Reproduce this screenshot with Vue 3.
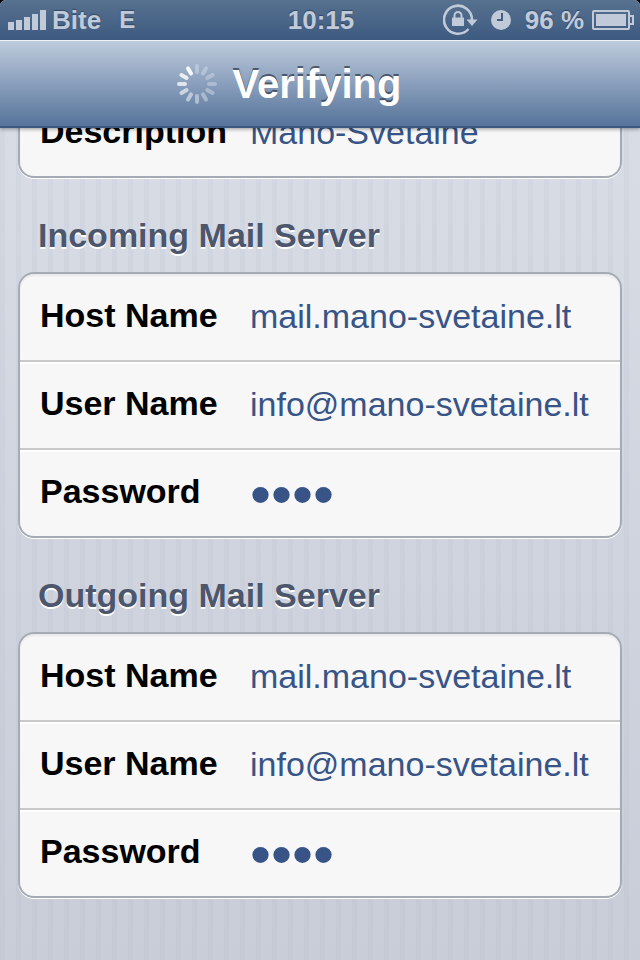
<script setup>
import { reactive } from 'vue'

const description = reactive({ label: 'Description', value: 'Mano-Svetaine' })

const groups = reactive([
  {
    id: 'incoming',
    title: 'Incoming Mail Server',
    fields: [
      { id: 'host', label: 'Host Name', type: 'text', value: 'mail.mano-svetaine.lt' },
      { id: 'user', label: 'User Name', type: 'text', value: 'info@mano-svetaine.lt' },
      { id: 'password', label: 'Password', type: 'password', value: 'pass' },
    ],
  },
  {
    id: 'outgoing',
    title: 'Outgoing Mail Server',
    fields: [
      { id: 'host', label: 'Host Name', type: 'text', value: 'mail.mano-svetaine.lt' },
      { id: 'user', label: 'User Name', type: 'text', value: 'info@mano-svetaine.lt' },
      { id: 'password', label: 'Password', type: 'password', value: 'pass' },
    ],
  },
])

// Spoke opacities, clockwise from twelve o'clock
const spokes = [0.28, 0.28, 0.28, 0.3, 0.32, 0.36, 0.42, 0.5, 0.6, 0.74, 0.82, 0.92]
</script>

<template>
  <div class="screen">
    <header class="top">
      <div class="status">
        <div class="side">
          <svg class="signal" width="38" height="20" viewBox="0 0 38 20" aria-hidden="true">
            <path d="M0 12h6v8H0zM8 10h6v10H8zM16 7h6v13h-6zM24 4h6v16h-6zM32 0h6v20h-6z" fill="currentColor" />
          </svg>
          <span>Bite</span>
          <span class="network">E</span>
        </div>
        <time>10:15</time>
        <div class="side right">
          <svg class="lock" width="36" height="32" viewBox="0 0 36 32" aria-hidden="true">
            <path d="M25.5 25A14 14 0 1 1 29 16" fill="none" stroke="currentColor" stroke-width="2.6" />
            <path d="M23.5 15.5h11L29 22z" fill="currentColor" />
            <rect x="9" y="13.5" width="12" height="8.5" rx="0.5" fill="currentColor" />
            <path d="M11.5 15v-3.5a3.5 3.5 0 0 1 7 0V15" fill="none" stroke="currentColor" stroke-width="2" />
          </svg>
          <svg class="clock" width="20" height="20" viewBox="0 0 20 20" aria-hidden="true">
            <circle cx="10" cy="10" r="10" fill="currentColor" />
            <path d="M11 3v7H6" fill="none" stroke="#425e83" stroke-width="2" />
          </svg>
          <span class="percent">96 %</span>
          <svg class="battery" width="42" height="20" viewBox="0 0 42 20" aria-hidden="true">
            <rect x="1" y="1" width="36" height="18" rx="1" fill="none" stroke="currentColor" stroke-width="2" />
            <rect x="4" y="4" width="30" height="12" fill="currentColor" />
            <path d="M38 6h3v8h-3" fill="none" stroke="currentColor" stroke-width="2" />
          </svg>
        </div>
      </div>
      <div class="nav">
        <svg class="spinner" width="40" height="40" viewBox="-20 -20 40 40" aria-hidden="true">
          <line
            v-for="(opacity, i) in spokes"
            :key="i"
            x1="0"
            y1="-12"
            x2="0"
            y2="-18"
            stroke="#fff"
            stroke-width="4"
            stroke-linecap="round"
            :opacity="opacity"
            :transform="`rotate(${i * 30})`"
          />
        </svg>
        <h1>Verifying</h1>
      </div>
    </header>

    <form class="content" @submit.prevent>
      <div class="card first">
        <div class="row">
          <label for="description">{{ description.label }}</label>
          <input id="description" v-model="description.value" type="text" />
        </div>
      </div>

      <section v-for="group in groups" :key="group.id">
        <h2>{{ group.title }}</h2>
        <div class="card">
          <div v-for="field in group.fields" :key="field.id" class="row">
            <label :for="`${group.id}-${field.id}`">{{ field.label }}</label>
            <input
              :id="`${group.id}-${field.id}`"
              v-model="field.value"
              :type="field.type"
              autocomplete="off"
              spellcheck="false"
            />
          </div>
        </div>
      </section>
    </form>
  </div>
</template>

<style>
body {
  margin: 0;
  background: #000;
}
</style>

<style scoped>
.screen {
  min-height: 100vh;
  box-sizing: border-box;
  border-radius: 6px 6px 0 0;
  overflow: hidden;
  font-family: 'Liberation Sans', Arial, Helvetica, sans-serif;
  background:
    repeating-linear-gradient(90deg, rgba(140, 155, 185, 0.07) 0 5px, transparent 5px 16px),
    linear-gradient(#d9dee7 0, #d6dbe4 200px, #cfd3dd 600px, #c9cdd8);
}

.top {
  position: relative;
  z-index: 1;
  box-shadow: 0 1px 4px rgba(0, 0, 0, 0.4);
}

.status {
  display: grid;
  grid-template-columns: 1fr auto 1fr;
  align-items: center;
  height: 40px;
  padding: 0 6px 0 8px;
  color: #c0cad8;
  font-size: 26px;
  font-weight: bold;
  line-height: 40px;
  text-shadow: 0 -1px 1px rgba(30, 50, 80, 0.6);
  background: linear-gradient(#57718f, #3d5a80);
}

.side {
  display: flex;
  align-items: center;
}

.side svg {
  flex: none;
}

.right {
  justify-content: flex-end;
}

.signal {
  margin-right: 6px;
}

.network {
  margin-left: 18px;
  font-size: 24px;
}

.clock {
  margin: 0 14px 0 12px;
}

.percent {
  margin-right: 8px;
}

.nav {
  display: flex;
  align-items: center;
  justify-content: center;
  gap: 16px;
  box-sizing: border-box;
  height: 88px;
  padding-right: 62px;
  border-top: 1px solid #eef2f7;
  border-bottom: 2px solid #3b5881;
  background: linear-gradient(#becbdc, #8a9fbc 50%, #56739a);
}

h1 {
  margin: 0;
  color: #fff;
  font-size: 40px;
  line-height: 48px;
  text-shadow: 0 -2px 0 rgba(50, 62, 80, 0.75);
}

.content {
  margin-top: -38px;
  padding: 0 18px 62px;
}

.card {
  border: 2px solid #a5abb5;
  border-radius: 16px;
  background: #f7f7f7;
  box-shadow: 0 1px 0 #fff, inset 0 2px 2px rgba(0, 0, 0, 0.06);
}

.first {
  border-top: 0;
  border-radius: 0 0 16px 16px;
}

.row {
  display: grid;
  grid-template-columns: 210px 1fr;
  align-items: center;
  height: 86px;
  padding-left: 20px;
}

.row + .row {
  border-top: 2px solid #c8c8c8;
  box-shadow: inset 0 2px 0 #fff;
}

label {
  padding-bottom: 4px;
  color: #000;
  font-size: 34px;
  font-weight: bold;
  line-height: 40px;
}

input {
  box-sizing: border-box;
  width: 100%;
  min-width: 0;
  height: 44px;
  margin: 0;
  padding: 0 0 2px;
  border: 0;
  outline: 0;
  color: #385487;
  font-family: inherit;
  font-size: 34px;
  background: transparent;
}

input[type='password'] {
  height: 80px;
  padding: 2px 0 0;
  font-size: 60px;
}

h2 {
  margin: 0;
  padding: 35px 20px 15px;
  color: #4c566c;
  font-size: 34px;
  line-height: 44px;
  text-shadow: 0 2px 0 #fff;
}
</style>
